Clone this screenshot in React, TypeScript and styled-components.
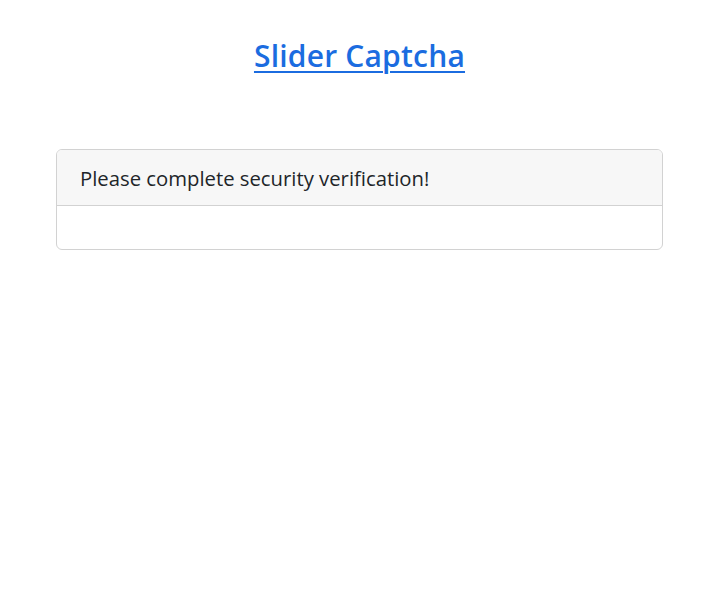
import styled, { createGlobalStyle } from "styled-components";

const GlobalStyle = createGlobalStyle`
  html, body {
    margin: 0;
    padding: 0;
    background: #ffffff;
  }
  body {
    font-family: "Open Sans", "Noto Sans", "Liberation Sans", sans-serif;
    color: #212529;
  }
`;

const Page = styled.div`
  display: flex;
  flex-direction: column;
  padding: 34px 51px 0 56px;
`;

const Title = styled.h1`
  margin: 0;
  text-align: center;
  font-size: 30px;
  font-weight: 600;
  line-height: 44px;
  letter-spacing: 0.2px;
  a {
    color: #1b6ce0;
    text-decoration: underline;
    text-underline-offset: 4px;
    text-decoration-thickness: 2px;
  }
`;

const Card = styled.div`
  margin-top: 71px;
  border: 1px solid #d2d2d2;
  border-radius: 6px;
  overflow: hidden;
`;

const CardHeader = styled.div`
  height: 55px;
  display: flex;
  align-items: center;
  padding: 0 23px;
  background: #f7f7f7;
  border-bottom: 1px solid #d2d2d2;
  font-size: 20.3px;
  color: #212529;
`;

const CardBody = styled.div`
  height: 43px;
`;

export default function App() {
  return (
    <>
      <GlobalStyle />
      <Page>
        <Title>
          <a href="#">Slider Captcha</a>
        </Title>
        <Card>
          <CardHeader>Please complete security verification!</CardHeader>
          <CardBody />
        </Card>
      </Page>
    </>
  );
}
